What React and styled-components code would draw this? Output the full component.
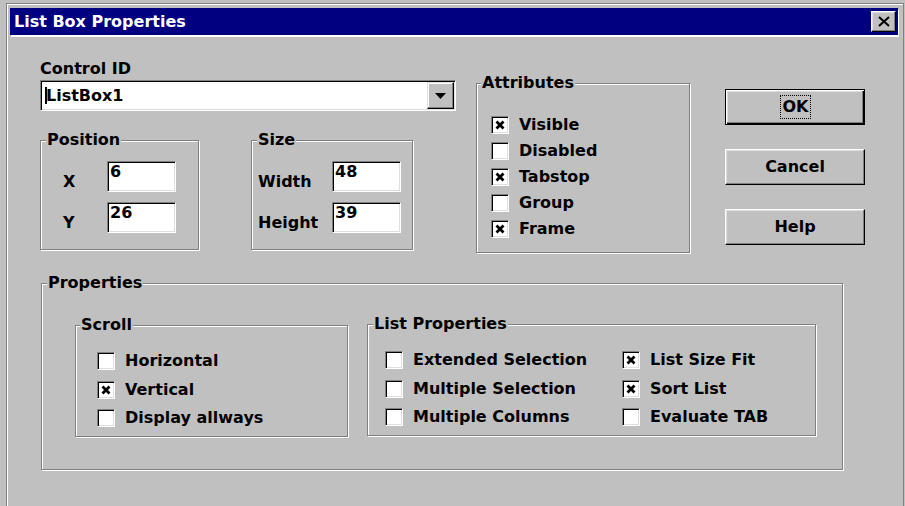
import React from 'react';
import styled, { createGlobalStyle } from 'styled-components';

const GlobalStyle = createGlobalStyle`
  html, body {
    margin: 0;
    padding: 0;
    background: #c0c0c0;
  }
`;

const Screen = styled.div`
  width: 905px;
  height: 506px;
  overflow: hidden;
  box-sizing: border-box;
  padding: 3px 1px 0 6px;
  background: #c0c0c0;
  color: #000;
  font: bold 16px "DejaVu Sans", "Liberation Sans", Arial, sans-serif;
`;

const Frame = styled.div`
  height: 100%;
  box-sizing: border-box;
  display: flex;
  flex-direction: column;
  border-left: 1px solid #808080;
  border-top: 1px solid #808080;
  border-right: 1px solid #808080;
  box-shadow: inset 1px 1px 0 #fff;
`;

const TitleBar = styled.div`
  height: 27px;
  margin: 4px 5px 0 3px;
  padding: 0 2px 0 4px;
  display: flex;
  align-items: center;
  justify-content: space-between;
  background: #000080;
  color: #fff;
  box-shadow: 1px 2px 0 #fff;
`;

const TitleText = styled.span`
  line-height: 18px;
`;

const CloseButton = styled.div`
  width: 25px;
  height: 21px;
  box-sizing: border-box;
  display: flex;
  align-items: center;
  justify-content: center;
  background: #c0c0c0;
  border: 1px solid;
  border-color: #fff #000 #000 #fff;
  box-shadow: inset -1px -1px 0 #808080, inset 1px 1px 0 #dfdfdf;
`;

const Body = styled.div`
  flex: 1;
  padding: 25px 0 0 33px;
`;

const TopRow = styled.div`
  display: flex;
  align-items: flex-start;
`;

const LeftColumn = styled.div`
  width: 416px;
  display: flex;
  flex-direction: column;
`;

const FieldLabel = styled.div`
  line-height: 18px;
  margin-bottom: 2px;
`;

const Combo = styled.div`
  height: 31px;
  box-sizing: border-box;
  display: flex;
  border: 1px solid;
  border-color: #808080 #fff #fff #808080;
  box-shadow: inset 1px 1px 0 #000, inset -1px -1px 0 #dfdfdf;
  padding: 1px;
`;

const ComboEdit = styled.div`
  flex: 1;
  display: flex;
  align-items: center;
  padding-left: 3px;
  background: #fff;
  line-height: 18px;
`;

const Caret = styled.span`
  display: inline-block;
  width: 2px;
  height: 17px;
  margin-right: -1px;
  background: #000;
`;

const DropButton = styled.div`
  width: 27px;
  box-sizing: border-box;
  display: flex;
  align-items: center;
  justify-content: center;
  background: #c0c0c0;
  border: 1px solid;
  border-color: #dfdfdf #000 #000 #dfdfdf;
  box-shadow: inset -1px -1px 0 #808080, inset 1px 1px 0 #fff;
`;

const GroupRow = styled.div`
  display: flex;
  gap: 52px;
  margin-top: 29px;
`;

const GroupBox = styled.div`
  width: ${(p) => p.$w}px;
  height: ${(p) => p.$h}px;
  box-sizing: border-box;
  display: flex;
  flex-direction: column;
  align-items: flex-start;
  margin: ${(p) => p.$margin || '0'};
  border: 1px solid #808080;
  box-shadow: inset 1px 1px 0 #fff, 1px 1px 0 #fff;
`;

const Caption = styled.div`
  margin: -10px 0 0 ${(p) => p.$indent || 5}px;
  padding: 0 1px;
  line-height: 18px;
  background: #c0c0c0;
`;

const FieldGrid = styled.div`
  display: grid;
  grid-template-columns: ${(p) => p.$labelWidth}px 69px;
  grid-auto-rows: 31px;
  row-gap: 10px;
  margin: 12px 0 0 ${(p) => p.$indent}px;
`;

const GridLabel = styled.span`
  align-self: end;
  line-height: 18px;
  margin-bottom: 1px;
`;

const EditBox = styled.div`
  box-sizing: border-box;
  padding: 2px 2px 0;
  background: #fff;
  line-height: 16px;
  border: 1px solid;
  border-color: #808080 #fff #fff #808080;
  box-shadow: inset 1px 1px 0 #000, inset -1px -1px 0 #dfdfdf;
`;

const CheckGrid = styled.div`
  display: grid;
  grid-template-columns: ${(p) => p.$columns || 'auto'};
  grid-auto-rows: ${(p) => p.$row}px;
  grid-auto-flow: ${(p) => p.$flow || 'row'};
  grid-template-rows: ${(p) => p.$rows || 'none'};
  margin: ${(p) => p.$gapTop}px 0 0 ${(p) => p.$indent}px;
`;

const CheckRow = styled.div`
  display: flex;
  align-items: center;
  gap: 10px;
  line-height: 18px;
`;

const Box = styled.span`
  width: 18px;
  height: 18px;
  box-sizing: border-box;
  display: flex;
  align-items: center;
  justify-content: center;
  background: #fff;
  border: 1px solid;
  border-color: #808080 #fff #fff #808080;
  box-shadow: inset 1px 1px 0 #000, inset -1px -1px 0 #dfdfdf;
`;

const ButtonColumn = styled.div`
  width: 140px;
  display: flex;
  flex-direction: column;
  gap: 24px;
  margin: 29px 0 0 35px;
`;

const Button = styled.div`
  height: 36px;
  box-sizing: border-box;
  display: flex;
  align-items: center;
  justify-content: center;
  background: #c0c0c0;
  line-height: 18px;
  border: 1px solid;
  border-color: ${(p) => (p.$default ? '#000' : '#fff #000 #000 #fff')};
  box-shadow: ${(p) =>
    p.$default
      ? 'inset 1px 1px 0 #fff, inset -1px -1px 0 #000, inset -2px -2px 0 #808080, inset 2px 2px 0 #dfdfdf'
      : 'inset -1px -1px 0 #808080, inset 1px 1px 0 #dfdfdf'};
`;

const FocusRing = styled.span`
  padding: 3px 2px 3px 3px;
  outline: 1px dotted #000;
  outline-offset: -1px;
`;

const PropsRow = styled.div`
  display: flex;
  align-items: flex-start;
  gap: 19px;
  margin: 32px 0 0 33px;
`;

function CheckMark() {
  return (
    <svg width="10" height="10" viewBox="0 0 10 10">
      <path d="M1.5 1.5 L8.5 8.5 M8.5 1.5 L1.5 8.5" stroke="#000" strokeWidth="2.8" />
    </svg>
  );
}

function Check({ label, checked }) {
  return (
    <CheckRow>
      <Box>{checked && <CheckMark />}</Box>
      {label}
    </CheckRow>
  );
}

const attributes = [
  ['Visible', true],
  ['Disabled', false],
  ['Tabstop', true],
  ['Group', false],
  ['Frame', true],
];

const scrollOptions = [
  ['Horizontal', false],
  ['Vertical', true],
  ['Display allways', false],
];

const listOptions = [
  ['Extended Selection', false],
  ['Multiple Selection', false],
  ['Multiple Columns', false],
  ['List Size Fit', true],
  ['Sort List', true],
  ['Evaluate TAB', false],
];

export default function App() {
  return (
    <>
      <GlobalStyle />
      <Screen>
        <Frame>
          <TitleBar>
            <TitleText>List Box Properties</TitleText>
            <CloseButton>
              <svg width="12" height="11" viewBox="0 0 12 11">
                <path d="M1 1 L11 10 M11 1 L1 10" stroke="#000" strokeWidth="2" />
              </svg>
            </CloseButton>
          </TitleBar>
          <Body>
            <TopRow>
              <LeftColumn>
                <FieldLabel>Control ID</FieldLabel>
                <Combo>
                  <ComboEdit>
                    <Caret />
                    ListBox1
                  </ComboEdit>
                  <DropButton>
                    <svg width="11" height="6" viewBox="0 0 11 6">
                      <path d="M0 0 H11 L5.5 6 Z" fill="#000" />
                    </svg>
                  </DropButton>
                </Combo>
                <GroupRow>
                  <GroupBox $w={159} $h={110}>
                    <Caption $indent={5}>Position</Caption>
                    <FieldGrid $labelWidth={44} $indent={22}>
                      <GridLabel>X</GridLabel>
                      <EditBox>6</EditBox>
                      <GridLabel>Y</GridLabel>
                      <EditBox>26</EditBox>
                    </FieldGrid>
                  </GroupBox>
                  <GroupBox $w={162} $h={110}>
                    <Caption $indent={5}>Size</Caption>
                    <FieldGrid $labelWidth={74} $indent={6}>
                      <GridLabel>Width</GridLabel>
                      <EditBox>48</EditBox>
                      <GridLabel>Height</GridLabel>
                      <EditBox>39</EditBox>
                    </FieldGrid>
                  </GroupBox>
                </GroupRow>
              </LeftColumn>

              <GroupBox $w={214} $h={170} $margin="23px 0 0 20px">
                <Caption $indent={4}>Attributes</Caption>
                <CheckGrid $row={26} $gapTop={20} $indent={14}>
                  {attributes.map(([label, on]) => (
                    <Check key={label} label={label} checked={on} />
                  ))}
                </CheckGrid>
              </GroupBox>

              <ButtonColumn>
                <Button $default>
                  <FocusRing>OK</FocusRing>
                </Button>
                <Button>Cancel</Button>
                <Button>Help</Button>
              </ButtonColumn>
            </TopRow>

            <GroupBox $w={802} $h={187} $margin="30px 0 0 1px">
              <Caption $indent={5}>Properties</Caption>
              <PropsRow>
                <GroupBox $w={273} $h={112} $margin="1px 0 0 0">
                  <Caption $indent={4}>Scroll</Caption>
                  <CheckGrid $row={28.5} $gapTop={12.75} $indent={21}>
                    {scrollOptions.map(([label, on]) => (
                      <Check key={label} label={label} checked={on} />
                    ))}
                  </CheckGrid>
                </GroupBox>
                <GroupBox $w={449} $h={112}>
                  <Caption $indent={5}>List Properties</Caption>
                  <CheckGrid
                    $row={28.5}
                    $gapTop={12.75}
                    $indent={17}
                    $columns="237px auto"
                    $rows="repeat(3, 28.5px)"
                    $flow="column"
                  >
                    {listOptions.map(([label, on]) => (
                      <Check key={label} label={label} checked={on} />
                    ))}
                  </CheckGrid>
                </GroupBox>
              </PropsRow>
            </GroupBox>
          </Body>
        </Frame>
      </Screen>
    </>
  );
}
